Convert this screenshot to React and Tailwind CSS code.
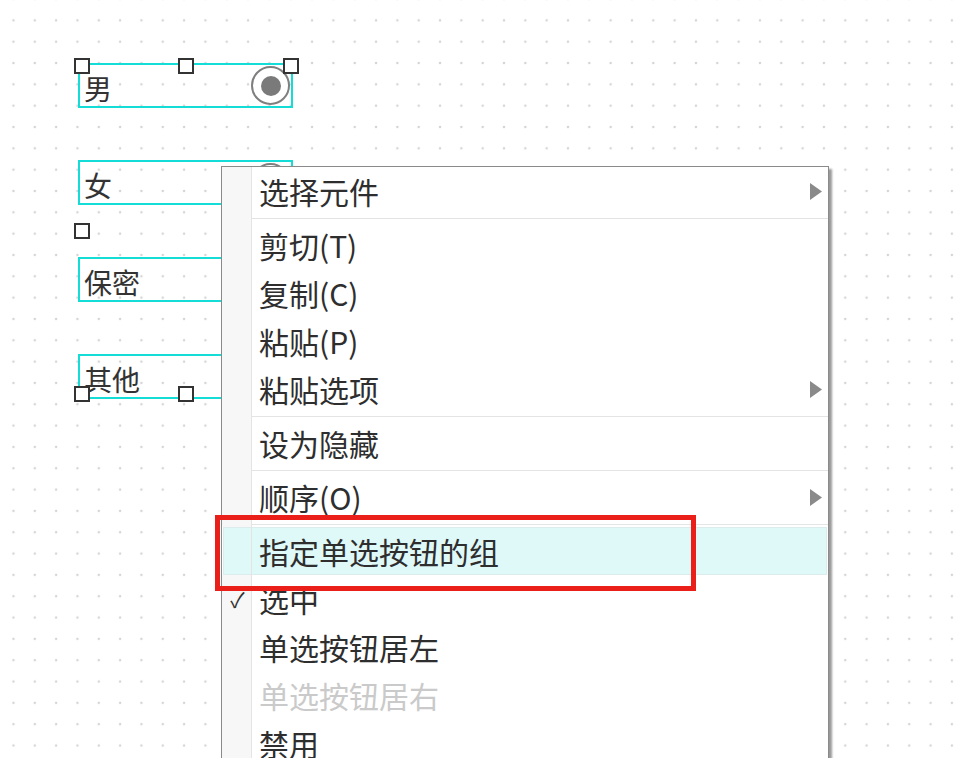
const font = { fontFamily: '"Noto Sans CJK SC", "Noto Sans", sans-serif' };

function Handle({ className }) {
	return <div className={`absolute w-[16px] h-[16px] bg-white border-2 border-[#333] ${className}`} />;
}

function RadioBox({ label, checked }) {
	return (
		<div className="w-[215px] h-[45px] border-[2.5px] border-[#14dcd6] flex items-center justify-between pl-[4px] pr-[1px]">
			<span className="text-[28px] text-[#333] leading-none pt-[4px]">{label}</span>
			<span className="w-[39px] h-[39px] rounded-full border-2 border-[#7f7f7f] bg-white flex items-center justify-center">
				{checked && <span className="w-[20px] h-[20px] rounded-full bg-[#7a7a7a]" />}
			</span>
		</div>
	);
}

function Arrow() {
	return (
		<svg width="12" height="17" viewBox="0 0 12 17" className="mr-[6px]">
			<polygon points="0,0 12,8.5 0,17" fill="#8a8a8a" />
		</svg>
	);
}

function Item({ label, sub, check, disabled, active }) {
	return (
		<div className="relative flex h-[48px]">
			{active && (
				<div className="absolute inset-y-0 left-[1px] right-[1px] bg-[#dff9f9] border border-[#dcebeb]" />
			)}
			<div
				className={`relative w-[30px] shrink-0 border-r border-[#e4e4e4] flex items-center justify-center ${active ? "" : "bg-[#f7f7f7]"}`}
			>
				{check && <span className="text-[21px] text-[#333] leading-none pl-[2px]">✓</span>}
			</div>
			<div className="relative flex-1 flex items-center justify-between pl-[7px]">
				<span className={`text-[30px] leading-none ${disabled ? "text-[#cacaca]" : "text-[#2e2e2e]"}`}>
					{label}
				</span>
				{sub && <Arrow />}
			</div>
		</div>
	);
}

function Sep() {
	return (
		<div className="flex h-[6px]">
			<div className="w-[30px] shrink-0 bg-[#f7f7f7] border-r border-[#e4e4e4]" />
			<div className="flex-1 flex items-center">
				<div className="h-px w-full bg-[#e4e4e4]" />
			</div>
		</div>
	);
}

export default function App() {
	return (
		<div
			style={font}
			className="relative w-[963px] h-[758px] overflow-hidden bg-white bg-[radial-gradient(circle,#d4d4d4_1.1px,transparent_1.6px)] bg-[size:21.33px_21.33px] bg-[position:2.8px_9.7px]"
		>
			{/* radio widgets on canvas */}
			<div className="absolute left-[78px] top-[63px] flex flex-col gap-[52px]">
				<RadioBox label="男" checked />
				<RadioBox label="女" />
				<RadioBox label="保密" />
				<RadioBox label="其他" />
			</div>

			{/* selection handles */}
			<Handle className="left-[74px] top-[58px]" />
			<Handle className="left-[178px] top-[58px]" />
			<Handle className="left-[283px] top-[58px]" />
			<Handle className="left-[74px] top-[223px]" />
			<Handle className="left-[74px] top-[386px]" />
			<Handle className="left-[178px] top-[386px]" />

			{/* context menu */}
			<div className="absolute left-[221px] top-[166px] w-[608px] bg-white border border-[#8a8a8a] shadow-[3px_3px_2px_rgba(0,0,0,0.4)]">
				<Item label="选择元件" sub />
				<Sep />
				<Item label="剪切(T)" />
				<Item label="复制(C)" />
				<Item label="粘贴(P)" />
				<Item label="粘贴选项" sub />
				<Sep />
				<Item label="设为隐藏" />
				<Sep />
				<Item label="顺序(O)" sub />
				<Sep />
				<Item label="指定单选按钮的组" active />
				<Item label="选中" check />
				<Item label="单选按钮居左" />
				<Item label="单选按钮居右" disabled />
				<Item label="禁用" />
				<Item label="" />
			</div>

			{/* annotation */}
			<div className="absolute left-[215px] top-[515px] w-[481px] h-[76px] border-[5px] border-[#ea1f1a]" />
		</div>
	);
}
